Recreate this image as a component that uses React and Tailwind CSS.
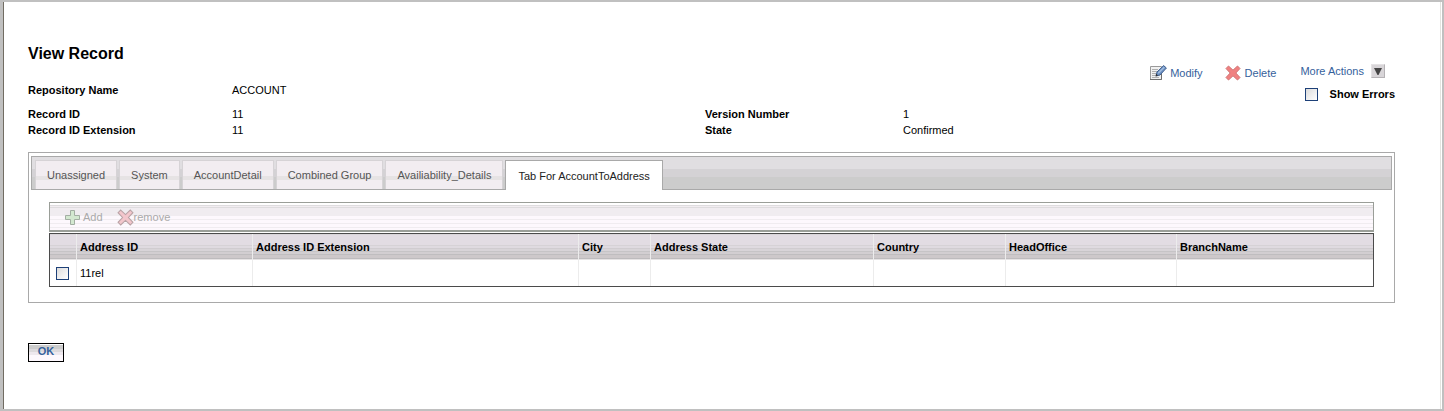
import React, { useState } from 'react';

const TABS = [
  'Unassigned',
  'System',
  'AccountDetail',
  'Combined Group',
  'Availiability_Details',
  'Tab For AccountToAddress',
];

const COLUMNS = [
  { label: 'Address ID', width: 'w-[176px]' },
  { label: 'Address ID Extension', width: 'w-[326px]' },
  { label: 'City', width: 'w-[72px]' },
  { label: 'Address State', width: 'w-[223px]' },
  { label: 'Country', width: 'w-[132px]' },
  { label: 'HeadOffice', width: 'w-[171px]' },
  { label: 'BranchName', width: '' },
];

const ROWS = [['11rel', '', '', '', '', '', '']];

const ModifyIcon = () => (
  <svg width="17" height="16" viewBox="0 0 17 16" aria-hidden="true">
    <path d="M.5 1.5h11v13H.5z" fill="#f1f1f1" stroke="#9a9a9a" />
    <path d="M0 14.5h11.5V8" fill="none" stroke="#6f6f6f" />
    <path d="M2 4.5h6M2 6.5h5M2 8.5h4M2 10.5h3M2 12.5h7" stroke="#b0b0b0" />
    <path d="M6 11l1-4L13.6.6 16.4 3 10 10z" fill="#6f93c4" stroke="#3f5f8f" />
    <path d="M8.3 8.2l6-6" stroke="#a9c3e4" strokeWidth="1.2" />
    <path d="M5.4 11.6l.8-2.8 1.9 1.8z" fill="#333" />
  </svg>
);

const CrossIcon = ({ width, height, fill, stroke }) => (
  <svg width={width} height={height} viewBox="0 0 16 16" aria-hidden="true">
    <path
      d="M3.5 1L8 5.2 12.5 1 15 3.5 10.8 8l4.2 4.5-2.5 2.5L8 10.8 3.5 15 1 12.5 5.2 8 1 3.5z"
      fill={fill}
      stroke={stroke}
    />
  </svg>
);

const PlusIcon = () => (
  <svg width="15" height="15" viewBox="0 0 15 15" aria-hidden="true">
    <path d="M5.5.5h4v5h5v4h-5v5h-4v-5h-5v-4h5z" fill="#d3e8d0" stroke="#a3aea3" />
  </svg>
);

const CheckBox = (props) => (
  <input
    type="checkbox"
    className="block size-[13px] shrink-0 appearance-none border border-[#1d4078] bg-linear-to-br from-[#dcdcdc] to-white checked:bg-[#1d4078]"
    {...props}
  />
);

const Field = ({ label, value, labelWidth }) => (
  <div className="flex leading-4">
    <dt className={`${labelWidth} shrink-0 font-bold`}>{label}</dt>
    <dd>{value}</dd>
  </div>
);

const RecordHeader = () => (
  <header className="flex justify-between">
    <div>
      <h1 className="text-base leading-6 font-bold">View Record</h1>
      <dl className="mt-4">
        <Field label="Repository Name" value="ACCOUNT" labelWidth="w-[204px]" />
      </dl>
    </div>
    <div className="flex flex-col items-end gap-[5px] pt-[21px]">
      <div className="flex h-[18px] items-end pr-[10px] text-[#35619c]">
        <a href="#modify" className="mr-[22px] flex items-center gap-[3px]">
          <ModifyIcon />
          Modify
        </a>
        <a href="#delete" className="mr-6 flex items-center gap-1">
          <CrossIcon width={16} height={16} fill="#f08080" stroke="#d07474" />
          Delete
        </a>
        <button type="button" className="flex items-center gap-[7px] self-start">
          More Actions
          <span className="flex size-[14px] items-center justify-center border border-[#b5b2b5] border-t-[#e4e2e4] border-l-[#e4e2e4] bg-[#d8d5d8]">
            <svg width="8" height="7" viewBox="0 0 8 7" aria-hidden="true">
              <path d="M0 0h8L4.5 7h-1z" fill="#444" />
            </svg>
          </span>
        </button>
      </div>
      <label className="flex h-4 items-center gap-3 font-bold">
        <CheckBox />
        Show Errors
      </label>
    </div>
  </header>
);

const RecordFields = () => (
  <div className="mt-1 grid grid-cols-[677fr_690fr]">
    <dl>
      <Field label="Record ID" value="11" labelWidth="w-[204px]" />
      <Field label="Record ID Extension" value="11" labelWidth="w-[204px]" />
    </dl>
    <dl>
      <Field label="Version Number" value="1" labelWidth="w-[198px]" />
      <Field label="State" value="Confirmed" labelWidth="w-[198px]" />
    </dl>
  </div>
);

const TabBar = ({ active, onSelect }) => (
  <div
    role="tablist"
    className="flex gap-[2px] border border-[#a9a9a9] bg-[linear-gradient(#e0dee1_0_12px,#d4d2d5_12px_20px,#cccccc_20px)] pt-[3px] pl-[3px]"
  >
    {TABS.map((tab) => (
      <button
        key={tab}
        type="button"
        role="tab"
        aria-selected={tab === active}
        onClick={() => onSelect(tab)}
        className={
          tab === active
            ? '-mb-px h-[30px] border border-b-0 border-[#a9a9a9] bg-white px-3 text-[#222]'
            : 'h-[29px] border border-b-0 border-[#d6d3d6] bg-[linear-gradient(#f2edf1_0_15px,#e6e3e4_15px_19px,#f2edf1_19px)] px-[11px] text-[#555]'
        }
      >
        {tab}
      </button>
    ))}
  </div>
);

const AddressTable = () => (
  <>
    <div className="flex h-[30px] items-center gap-[14px] border border-b-2 border-[#9a9e98] bg-[linear-gradient(#fff_0_2px,#dedcde_2px_3px,#f2edf1_3px_4px,#dedcde_4px_5px,#f0ecf0_5px_13px,#fdf8fd_13px_16px,#f0ecf0_16px_17px,#fdf8fd_17px_20px,#f0ecf0_20px_21px,#fdf8fd_21px_24px,#f0ecf0_24px_25px,#fdf8fd_25px)] pt-px pl-[15px] text-[#aaa]">
      <button type="button" disabled className="flex items-center gap-[3px]">
        <PlusIcon />
        Add
      </button>
      <button type="button" disabled className="flex items-center">
        <CrossIcon width={17} height={17} fill="#f3c6cc" stroke="#b9a3a6" />
        remove
      </button>
    </div>
    <table className="mt-px w-full table-fixed border-separate border-spacing-0 border border-[#4b4b4b] text-left">
      <thead>
        <tr className="h-[26px] bg-[linear-gradient(#d8d4d8_0_1px,#e2dce3_1px_11px,#d6d2d6_11px_12px,#dfdae0_12px_14px,#d0ccd0_14px_15px,#d8d4d8_15px_17px,#c6c4c6_17px_18px,#d2ced1_18px_20px,#bfbdbf_20px_21px,#cdc8ca_21px_24px,#bdbbbd_24px_25px,#e6e3e4_25px)]">
          <th className="w-[27px] border-r border-[#ececec]" aria-label="Select" />
          {COLUMNS.map(({ label, width }) => (
            <th key={label} className={`${width} border-r border-[#ececec] px-[3px] pb-px font-bold last:border-r-0`}>
              {label}
            </th>
          ))}
        </tr>
      </thead>
      <tbody>
        {ROWS.map((row) => (
          <tr key={row[0]} className="h-[26px]">
            <td className="border-r border-[#ececec] pl-[6px]">
              <CheckBox aria-label={`Select ${row[0]}`} />
            </td>
            {row.map((cell, i) => (
              <td key={COLUMNS[i].label} className="border-r border-[#ececec] px-[3px] last:border-r-0">
                {cell}
              </td>
            ))}
          </tr>
        ))}
      </tbody>
    </table>
  </>
);

const App = () => {
  const [active, setActive] = useState('Tab For AccountToAddress');

  return (
    <div className="flex min-h-screen border-2 border-l-[3px] border-[#c0c0c0] bg-white pr-px font-['Liberation_Sans',Arial,sans-serif] text-[11px] leading-4 text-black">
      <main className="grow border-x border-r-[#e3e3df] border-l-[#716c62] pt-10 pr-[45px] pb-8 pl-6">
        <RecordHeader />
        <RecordFields />
        <section className="mt-[14px] border border-[#a9a9a9]">
          <div className="px-[2px] pt-[3px]">
            <TabBar active={active} onSelect={setActive} />
          </div>
          <div role="tabpanel" aria-label={active} className="px-5 pt-3 pb-[15px]">
            <AddressTable />
          </div>
        </section>
        <button
          type="button"
          className="mt-10 block h-[19px] w-9 border border-black bg-[linear-gradient(#fff_0_1px,#cccccc_1px_5px,#dcd9dc_5px_8px,#eee8ee_8px_11px,#fdf8fd_11px)] pb-[2px] leading-[15px] font-bold text-[#35619c]"
        >
          OK
        </button>
      </main>
    </div>
  );
};

export default App;
